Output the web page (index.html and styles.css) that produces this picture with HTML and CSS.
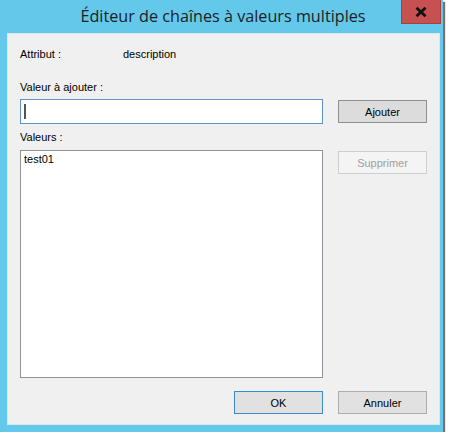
FILE: index.html
```html
<!DOCTYPE html>
<html lang="fr">
<head>
<meta charset="utf-8">
<title>Éditeur de chaînes à valeurs multiples</title>
<link rel="stylesheet" href="styles.css">
</head>
<body>
<div class="window">
  <div class="titlebar">
    <div class="title">Éditeur de chaînes à valeurs multiples</div>
    <div class="close">
      <svg width="12" height="10" viewBox="0 0 12 10"><path d="M1.5 0.8 L10.5 9.2 M10.5 0.8 L1.5 9.2" stroke="#111" stroke-width="2.8" fill="none"/></svg>
    </div>
  </div>
  <div class="client">
    <div class="attr-row">
      <span class="attr-label">Attribut :</span>
      <span class="attr-value">description</span>
    </div>
    <div class="label label-add">Valeur à ajouter :</div>
    <div class="row">
      <div class="input"><span class="caret"></span></div>
      <div class="btn btn-strong">Ajouter</div>
    </div>
    <div class="label label-values">Valeurs :</div>
    <div class="row row-top">
      <div class="listbox"><div class="item">test01</div></div>
      <div class="btn btn-disabled">Supprimer</div>
    </div>
    <div class="footer">
      <div class="btn btn-default">OK</div>
      <div class="btn">Annuler</div>
    </div>
  </div>
</div>
</body>
</html>
```

FILE: styles.css
```css
html, body {
  margin: 0;
  padding: 0;
  background: #ffffff;
}
body {
  font-family: "Liberation Sans", Arial, sans-serif;
  font-size: 11px;
  color: #000;
}
.window {
  width: 443px;
  height: 432px;
  background: #63c8ea;
  box-shadow: 2px 2px 1px rgba(0, 0, 0, 0.55);
  display: flex;
  flex-direction: column;
}
.titlebar {
  height: 33px;
  display: flex;
  position: relative;
  justify-content: center;
}
.title {
  font-family: "Open Sans", "Noto Sans", sans-serif;
  font-size: 16.2px;
  line-height: 33px;
  color: #1e1e1e;
  margin-left: 3px;
}
.close {
  position: absolute;
  top: 0;
  right: 2px;
  width: 38px;
  height: 23px;
  background: #c75050;
  border: 1px solid #a94040;
  border-top: none;
  display: flex;
  align-items: center;
  justify-content: center;
}
.close svg {
  display: block;
  margin-top: 1px;
}
.client {
  margin: 0 3px 7px 7px;
  flex: 1;
  background: #f0f0f0;
  border: 1px solid #d6e7ef;
  padding: 14px 12px 0 12px;
}
.attr-row {
  display: flex;
  line-height: 13px;
  height: 13px;
}
.attr-label {
  width: 103px;
}
.label {
  line-height: 13px;
  height: 13px;
}
.label-add {
  margin-top: 20px;
}
.label-values {
  margin-top: 7px;
}
.row {
  display: flex;
  align-items: center;
  gap: 15px;
  margin-top: 5px;
}
.row-top {
  align-items: flex-start;
  margin-top: 6px;
}
.input {
  width: 301px;
  height: 23px;
  background: #fff;
  border: 1px solid #5b93c8;
  display: flex;
  align-items: center;
}
.caret {
  width: 2px;
  height: 15px;
  background: #555;
  margin-left: 3px;
}
.listbox {
  width: 301px;
  height: 226px;
  background: #fff;
  border: 1px solid #8f949a;
}
.item {
  padding: 2px 0 0 3px;
  line-height: 13px;
}
.btn {
  width: 87px;
  height: 21px;
  background: #e1e1e1;
  border: 1px solid #adadad;
  display: flex;
  align-items: center;
  justify-content: center;
  color: #000;
  box-sizing: content-box;
}
.btn-strong {
  border-color: #8f8f8f;
  background: #dcdcdc;
}
.btn-disabled {
  background: #f4f4f4;
  border-color: #cfcfcf;
  color: #a0a0a0;
  margin-top: 1px;
}
.btn-default {
  border-color: #3c8ad0;
}
.footer {
  display: flex;
  justify-content: flex-end;
  gap: 15px;
  margin-top: 13px;
}
```
